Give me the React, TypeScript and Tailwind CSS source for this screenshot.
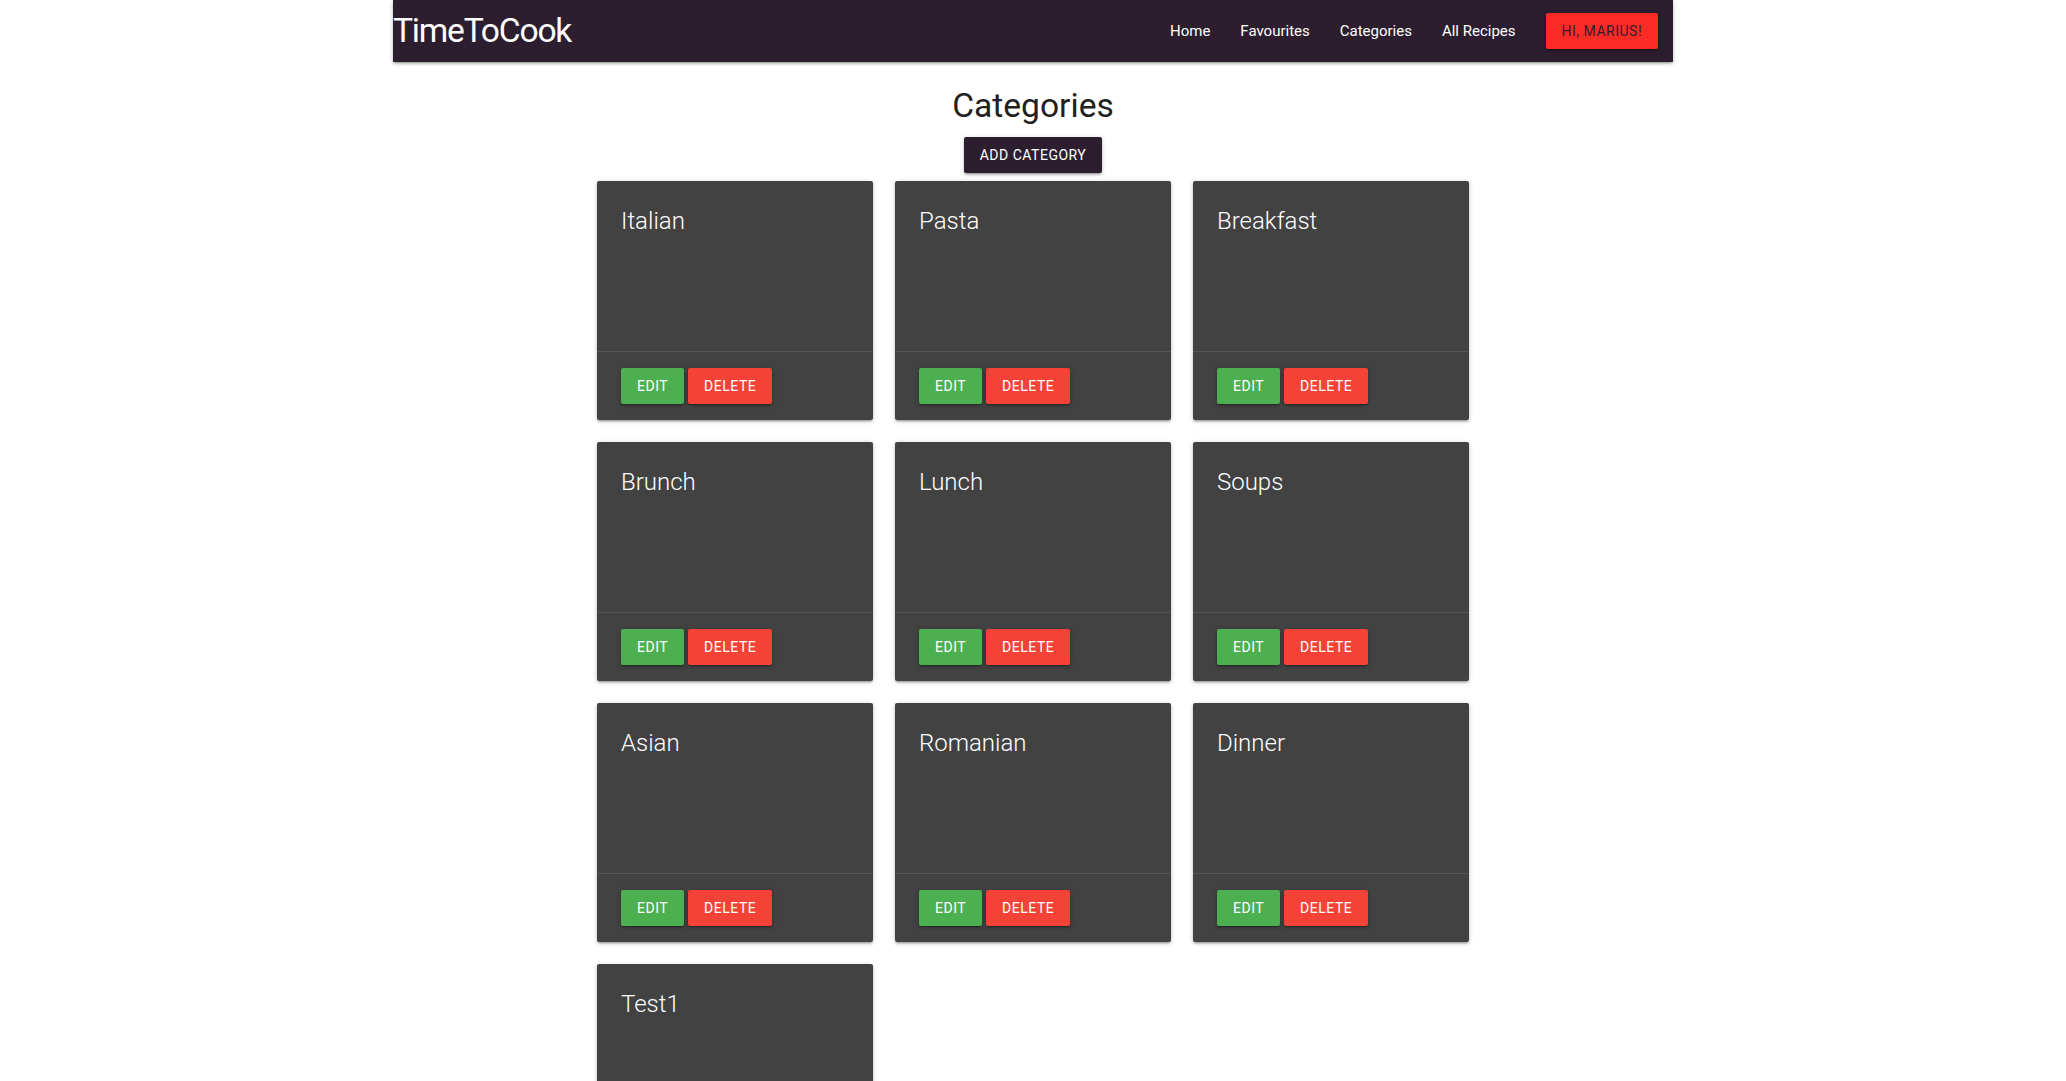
import React from "react";

const categories = ["Italian", "Pasta", "Breakfast", "Brunch", "Lunch", "Soups", "Asian", "Romanian", "Dinner", "Test1"];

const btnShadow =
	"shadow-[0_2px_2px_0_rgba(0,0,0,0.14),0_3px_1px_-2px_rgba(0,0,0,0.12),0_1px_5px_0_rgba(0,0,0,0.2)]";

function NavLink({ label }: { label: string }) {
	return (
		<li className="h-full">
			<a href="#" className="flex h-full items-center px-[15px] text-[15px] text-white">
				{label}
			</a>
		</li>
	);
}

function CategoryCard({ name }: { name: string }) {
	return (
		<div className={`rounded-[2px] bg-[#424242] ${btnShadow}`}>
			<div className="h-[170px] p-6">
				<span className="block text-[24px] font-light leading-[32px] text-white">{name}</span>
			</div>
			<div className="flex h-[69px] items-center gap-[4px] border-t border-[rgba(160,160,160,0.2)] px-6">
				<button
					className={`h-[36px] rounded-[2px] bg-[#4caf50] px-4 text-[14px] uppercase tracking-[0.5px] text-white ${btnShadow}`}
				>
					Edit
				</button>
				<button
					className={`h-[36px] rounded-[2px] bg-[#f44336] px-4 text-[14px] uppercase tracking-[0.5px] text-white ${btnShadow}`}
				>
					Delete
				</button>
			</div>
		</div>
	);
}

export default function App() {
	return (
		<div className="min-h-screen bg-white font-['Roboto',sans-serif] text-[#212121]">
			<nav
				className={`mx-auto flex h-[62px] w-[1280px] items-center justify-between bg-[#2d1e2f] ${btnShadow}`}
			>
				<a href="#" className="text-[33.6px] leading-none tracking-[-1.2px] text-white">
					TimeToCook
				</a>
				<ul className="flex h-full items-center">
					<NavLink label="Home" />
					<NavLink label="Favourites" />
					<NavLink label="Categories" />
					<NavLink label="All Recipes" />
					<li className="px-[15px]">
						<button
							className={`h-[36px] rounded-[2px] bg-[#fc2b26] px-4 text-[14px] uppercase tracking-[0.5px] text-[#2d1e2f] ${btnShadow}`}
						>
							Hi, Marius!
						</button>
					</li>
				</ul>
			</nav>

			<div className="flex flex-col items-center">
				<h4 className="mt-[24px] text-[33.6px] leading-[40px]">Categories</h4>
				<button
					className={`mt-[11px] h-[36px] rounded-[2px] bg-[#2d1e2f] px-4 text-[14px] uppercase tracking-[0.5px] text-white ${btnShadow}`}
				>
					Add Category
				</button>
				<div className="mt-[8px] mb-[24px] grid grid-cols-[276px_276px_276px] gap-x-[22px] gap-y-[22px]">
					{categories.map((c) => (
						<CategoryCard key={c} name={c} />
					))}
				</div>
			</div>
		</div>
	);
}
